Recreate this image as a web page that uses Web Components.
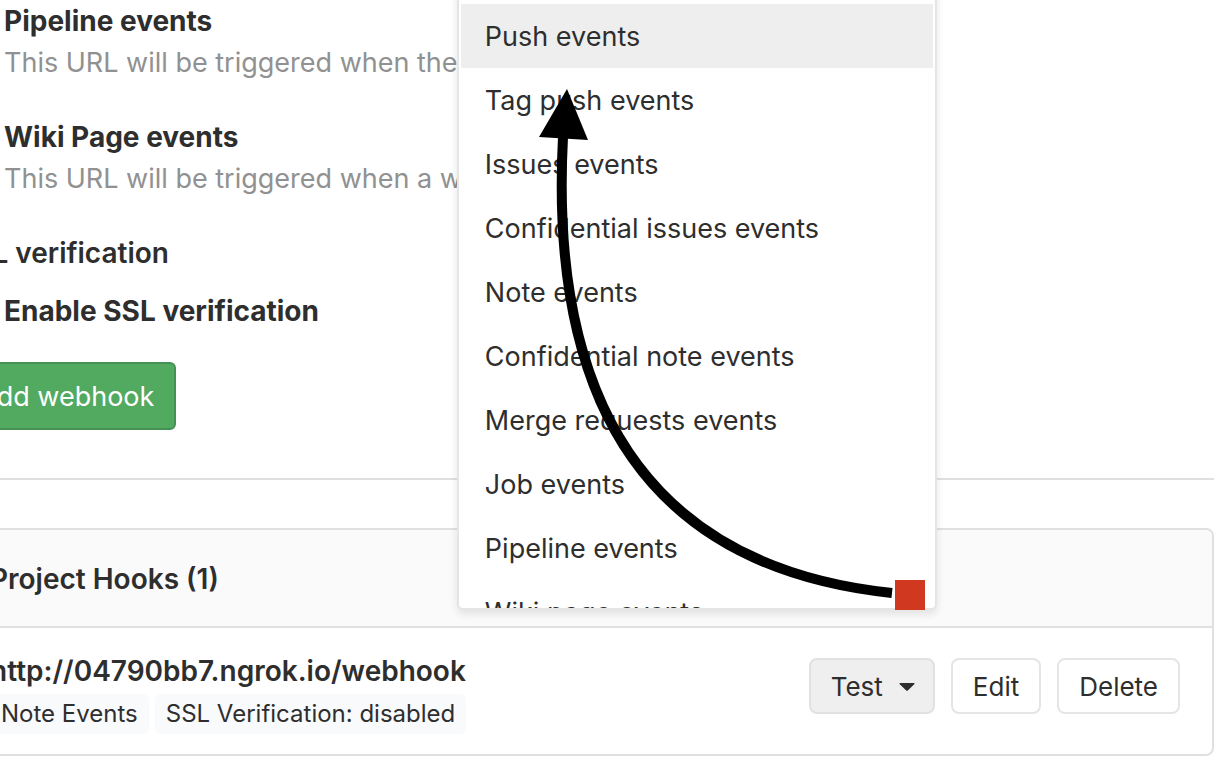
<!DOCTYPE html>
<html lang="en">
<head>
<meta charset="utf-8">
<title>Project Hooks</title>
<style>
  html, body { margin: 0; background: #fff; }
  body {
    overflow-x: hidden;
    font-family: Inter, "Liberation Sans", sans-serif;
    font-size: 27px;
    line-height: 42px;
    color: #2e2e2e;
  }
</style>
</head>
<body>
<hooks-page></hooks-page>

<script>
const define = (name, html) => {
  const template = document.createElement('template');
  template.innerHTML = html;
  customElements.define(name, class extends HTMLElement {
    constructor() {
      super();
      this.attachShadow({ mode: 'open' }).append(template.content.cloneNode(true));
    }
  });
};

define('event-option', `
  <style>
    :host { display: block; }
    label { display: grid; grid-template-columns: 26px 1fr; column-gap: 22px; align-items: center; }
    input { width: 26px; height: 26px; margin: 0; }
    .name { font-size: 28px; font-weight: 700; }
    .help { grid-column: 2; color: #919191; white-space: nowrap; }
  </style>
  <label>
    <input type="checkbox">
    <span class="name"><slot></slot></span>
    <span class="help"><slot name="help"></slot></span>
  </label>
`);

define('ssl-option', `
  <style>
    :host { display: block; font-size: 28px; }
    fieldset { border: 0; margin: 0; padding: 0; min-width: 0; display: flex; flex-direction: column; gap: 16px; }
    legend { float: left; padding: 0; font-weight: 600; }
    label { display: flex; align-items: center; gap: 22px; font-weight: 700; }
    input { width: 26px; height: 26px; margin: 0; }
  </style>
  <fieldset>
    <legend>SSL verification</legend>
    <label><input type="checkbox"><span>Enable SSL verification</span></label>
  </fieldset>
`);

define('add-button', `
  <style>
    :host { display: block; }
    button {
      box-sizing: border-box; height: 68px; padding: 2px 20px 0; font: inherit; color: #fff;
      background: #52a960; border: 2px solid #459153; border-radius: 6px;
    }
  </style>
  <button type="button"><slot></slot></button>
`);

define('hook-button', `
  <style>
    :host { display: block; }
    button {
      box-sizing: border-box; height: 56px; padding: 2px 20px 0; font: inherit; font-size: 26px;
      display: flex; align-items: center; gap: 16px; color: inherit;
      background: #fff; border: 2px solid #e5e5e5; border-radius: 8px;
    }
    :host([active]) button { padding-right: 18px; background: #efefef; border-color: #e1e1e1; }
    svg { display: none; width: 16px; height: 8px; }
    :host([active]) svg { display: block; }
  </style>
  <button type="button"><slot></slot><svg viewBox="0 0 16 8" aria-hidden="true"><path d="M1 0H15Q16 .5 15 1.5L9 7.2Q8 8.2 7 7.2L1 1.5Q0 .5 1 0Z" fill="#2e2e2e"/></svg></button>
`);

define('menu-item', `
  <style>
    :host { display: block; }
    button {
      display: block; width: 100%; height: 64px; padding: 2px 24px 0; border: 0;
      font: inherit; color: inherit; text-align: left; background: none;
    }
    :host([active]) button { background: #eee; }
  </style>
  <button type="button" role="menuitem"><slot></slot></button>
`);

define('curved-arrow', `
  <style>
    :host { display: block; pointer-events: none; }
    svg { display: block; width: 100%; height: 100%; overflow: visible; }
  </style>
  <svg viewBox="456 -14 480 624" aria-hidden="true">
    <path d="M891 593Q540 556 562 137" fill="none" stroke="#000" stroke-width="10"/>
    <path d="M566 89L538 137L587 140Z"/>
    <path d="M894 580H924V610H894Z" fill="#d13820"/>
  </svg>
`);

define('test-menu', `
  <style>
    :host { display: block; position: relative; }
    .menu {
      position: absolute; right: -2px; bottom: calc(100% + 48px);
      box-sizing: border-box; width: 480px; height: 624px;
      background: #fff; border: 2px solid #e5e5e5; border-radius: 6px;
      box-shadow: 0 4px 8px rgba(0,0,0,.1);
    }
    .items { box-sizing: border-box; height: 100%; padding: 16px 2px 0; overflow: hidden; }
    curved-arrow { position: absolute; inset: -2px; }
  </style>
  <hook-button active>Test</hook-button>
  <div class="menu" role="menu">
    <div class="items">
      <menu-item active>Push events</menu-item>
      <menu-item>Tag push events</menu-item>
      <menu-item>Issues events</menu-item>
      <menu-item>Confidential issues events</menu-item>
      <menu-item>Note events</menu-item>
      <menu-item>Confidential note events</menu-item>
      <menu-item>Merge requests events</menu-item>
      <menu-item>Job events</menu-item>
      <menu-item>Pipeline events</menu-item>
      <menu-item>Wiki page events</menu-item>
    </div>
    <curved-arrow></curved-arrow>
  </div>
`);

define('hook-tag', `
  <style>
    :host { display: block; padding: 0 11px; font-size: 24px; line-height: 40px; background: #f9fafc; border-radius: 6px; }
  </style>
  <slot></slot>
`);

define('hooks-panel', `
  <style>
    :host { display: block; border: 2px solid #e0e0e0; border-radius: 8px; }
    header { padding: 28px 32px 26px; background: #fafafa; border-bottom: 2px solid #e0e0e0; border-radius: 6px 6px 0 0; }
    h5 { margin: 0; font-size: 28px; font-weight: 600; }
    .hook { display: flex; justify-content: space-between; padding: 22px 32px 20px; }
    .url { font-size: 28px; font-weight: 600; }
    .tags { display: flex; gap: 6px; margin-top: 2px; }
    .actions { display: flex; gap: 16px; align-items: flex-start; padding-top: 8px; }
  </style>
  <header><h5>Project Hooks (1)</h5></header>
  <div class="hook">
    <div>
      <div class="url">http://04790bb7.ngrok.io/webhook</div>
      <div class="tags">
        <hook-tag>Note Events</hook-tag>
        <hook-tag>SSL Verification: disabled</hook-tag>
      </div>
    </div>
    <div class="actions">
      <test-menu></test-menu>
      <hook-button>Edit</hook-button>
      <hook-button>Delete</hook-button>
    </div>
  </div>
`);

define('hooks-page', `
  <style>
    :host { display: block; }
    main { margin: 0 8px 0 -44px; }
    form { display: flex; flex-direction: column; gap: 32px; }
    add-button { margin-top: -2px; }
    hr { margin: 48px 0; border: 0; border-top: 2px solid #e0e0e0; }
  </style>
  <main>
    <form>
      <event-option>Pipeline events<span slot="help">This URL will be triggered when the</span></event-option>
      <event-option>Wiki Page events<span slot="help">This URL will be triggered when a wiki</span></event-option>
      <ssl-option></ssl-option>
      <add-button>Add webhook</add-button>
    </form>
    <hr>
    <hooks-panel></hooks-panel>
  </main>
`);
</script>
</body>
</html>
